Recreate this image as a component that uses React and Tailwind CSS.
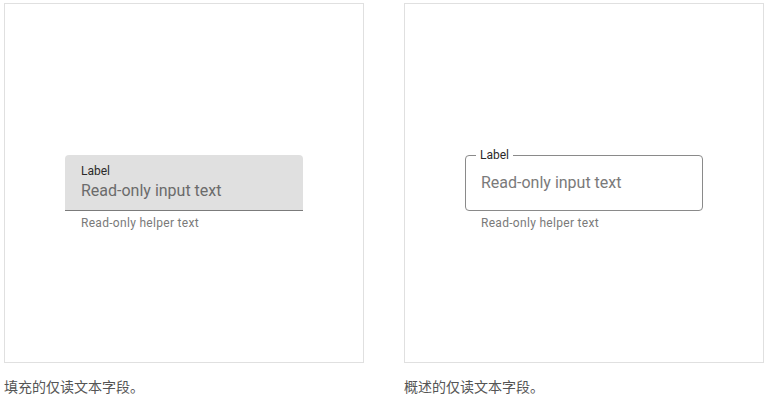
export default function App() {
    return (
        <div className="w-[767px] h-[420px] bg-white flex gap-[40px] pl-[4px] pt-[3px]" style={{fontFamily: "Roboto, 'Noto Sans CJK SC', sans-serif"}}>
            {/* Filled */}
            <div className="flex flex-col">
                <div className="w-[360px] h-[360px] border border-[#e0e0e0] pt-[151px] pl-[60px]">
                    <div className="w-[238px]">
                        <div className="h-[56px] bg-[#e0e0e0] rounded-t-[4px] border-b border-[#7b7b7b] pl-[16px] pt-[8px]">
                            <div className="text-[12px] leading-[16px] text-[#2a2a2a]">Label</div>
                            <div className="text-[16px] leading-[24px] text-[#6b6b6b]">Read-only input text</div>
                        </div>
                        <div className="pl-[16px] mt-[4px] text-[12px] leading-[16px] tracking-[0.3px] text-[#7a7a7a]">Read-only helper text</div>
                    </div>
                </div>
                <div className="mt-[13px] text-[14px] leading-[20px] text-[#555555]" style={{fontFamily: "'Noto Sans CJK SC', sans-serif"}}>填充的仅读文本字段。</div>
            </div>

            {/* Outlined */}
            <div className="flex flex-col">
                <div className="w-[360px] h-[360px] border border-[#e0e0e0] pt-[151px] pl-[60px]">
                    <div className="w-[238px]">
                        <div className="relative h-[56px] border border-[#8a8a8a] rounded-[4px] pl-[15px] flex items-center">
                            <span className="absolute left-[10px] top-[-9px] px-[4px] bg-white text-[12px] leading-[16px] text-[#2a2a2a]">Label</span>
                            <div className="text-[16px] leading-[24px] text-[#7a7a7a]">Read-only input text</div>
                        </div>
                        <div className="pl-[16px] mt-[4px] text-[12px] leading-[16px] tracking-[0.3px] text-[#7a7a7a]">Read-only helper text</div>
                    </div>
                </div>
                <div className="mt-[13px] text-[14px] leading-[20px] text-[#555555]" style={{fontFamily: "'Noto Sans CJK SC', sans-serif"}}>概述的仅读文本字段。</div>
            </div>
        </div>
    );
}
